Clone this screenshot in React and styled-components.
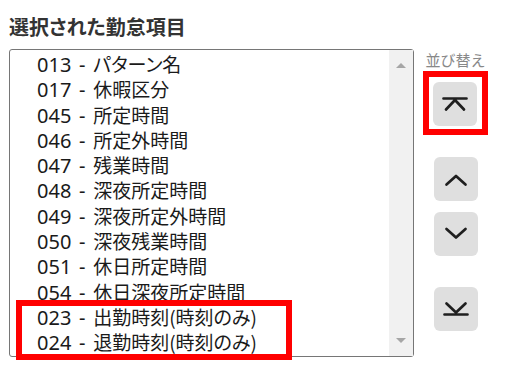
import styled, { createGlobalStyle } from "styled-components";

const GlobalStyle = createGlobalStyle`
  body {
    margin: 0;
    background: #fff;
    font-family: "Noto Sans", "Noto Sans CJK JP", sans-serif;
  }
`

const Page = styled.div`
  padding: 13px 0 0 9px;
  width: 506px;
  height: 384px;
  box-sizing: border-box;
`

const Title = styled.h2`
  margin: 0 0 8px;
  font-family: "Noto Sans CJK JP", sans-serif;
  font-size: 20px;
  line-height: 28px;
  font-weight: 700;
  color: #333;
  font-feature-settings: "palt";
`

const Row = styled.div`
  display: flex;
  align-items: flex-start;
`

const ListBox = styled.div`
  position: relative;
  display: flex;
  width: 405px;
  height: 308px;
  box-sizing: border-box;
  border: 1px solid #767676;
  border-radius: 3px;
  background: #fff;
`

const Options = styled.ul`
  flex: 1;
  margin: 0;
  padding: 2px 0 0 27px;
  list-style: none;
  overflow: hidden;
`

const Option = styled.li`
  height: 25.3px;
  font-family: "Noto Sans", sans-serif;
  font-size: 20px;
  line-height: 25.3px;
  color: #1a1a1a;
  white-space: nowrap;
  word-spacing: 2.5px;
`

const Name = styled.span`
  font-family: "Noto Sans CJK JP", sans-serif;
  font-size: 19px;
  line-height: 1;
  font-feature-settings: "palt";
`

const Scrollbar = styled.div`
  width: 24px;
  background: #f1f1f1;
  display: flex;
  flex-direction: column;
  align-items: center;
  justify-content: space-between;
  padding: 13px 0 13px;
  box-sizing: border-box;
`

const Arrow = styled.span`
  width: 0;
  height: 0;
  border-left: 5px solid transparent;
  border-right: 5px solid transparent;
  ${({ $down }) =>
    $down
      ? "border-top: 5px solid #a6a6a6;"
      : "border-bottom: 5px solid #a6a6a6;"}
`

const Mark = styled.div`
  position: absolute;
  left: 6px;
  top: 250px;
  width: 276px;
  height: 60px;
  box-sizing: border-box;
  border: 6px solid #ff0000;
  pointer-events: none;
`

const SortPanel = styled.div`
  display: flex;
  flex-direction: column;
  align-items: center;
  margin-left: 9px;
  padding-top: 2px;
`

const Label = styled.div`
  font-family: "Noto Sans CJK JP", sans-serif;
  font-size: 15px;
  line-height: 18px;
  color: #888;
  margin-bottom: 2px;
  white-space: nowrap;
`

const Frame = styled.div`
  border: 6px solid #ff0000;
  padding: 5px 5px 3px 4px;
`

const SortButton = styled.button`
  width: 44px;
  height: 44px;
  margin-top: ${({ $gap }) => $gap || 0}px;
  padding: 0;
  border: none;
  border-radius: 6px;
  background: #dfdfdf;
  display: flex;
  align-items: center;
  justify-content: center;
  cursor: pointer;
`

const Icon = ({ d }) => (
  <svg width="26" height="16" viewBox="0 0 26 16" fill="none">
    <path d={d} stroke="#1f1f1f" strokeWidth="2.7" strokeLinecap="round" strokeLinejoin="round" />
  </svg>
)

const items = [
  ["013", "パターン名"],
  ["017", "休暇区分"],
  ["045", "所定時間"],
  ["046", "所定外時間"],
  ["047", "残業時間"],
  ["048", "深夜所定時間"],
  ["049", "深夜所定外時間"],
  ["050", "深夜残業時間"],
  ["051", "休日所定時間"],
  ["054", "休日深夜所定時間"],
  ["023", "出勤時刻(時刻のみ)"],
  ["024", "退勤時刻(時刻のみ)"],
]

const App = () => {
  return (
    <Page>
      <GlobalStyle />
      <Title>選択された勤怠項目</Title>
      <Row>
        <ListBox>
          <Options>
            {items.map(([code, name]) => (
              <Option key={code}>
                {code} - <Name>{name}</Name>
              </Option>
            ))}
          </Options>
          <Scrollbar>
            <Arrow />
            <Arrow $down />
          </Scrollbar>
          <Mark />
        </ListBox>
        <SortPanel>
          <Label>並び替え</Label>
          <Frame>
            <SortButton>
              <Icon d="M1.5 2.5H24.5M4 13.5L13 4L22 13.5" />
            </SortButton>
          </Frame>
          <SortButton $gap={22}>
            <Icon d="M3.5 13.5L13 5L22.5 13.5" />
          </SortButton>
          <SortButton $gap={11}>
            <Icon d="M3.5 3L13 11.5L22.5 3" />
          </SortButton>
          <SortButton $gap={31}>
            <Icon d="M3.5 2.5L13 11.5L22.5 2.5M1.5 13.5H24.5" />
          </SortButton>
        </SortPanel>
      </Row>
    </Page>
  )
}

export default App;
